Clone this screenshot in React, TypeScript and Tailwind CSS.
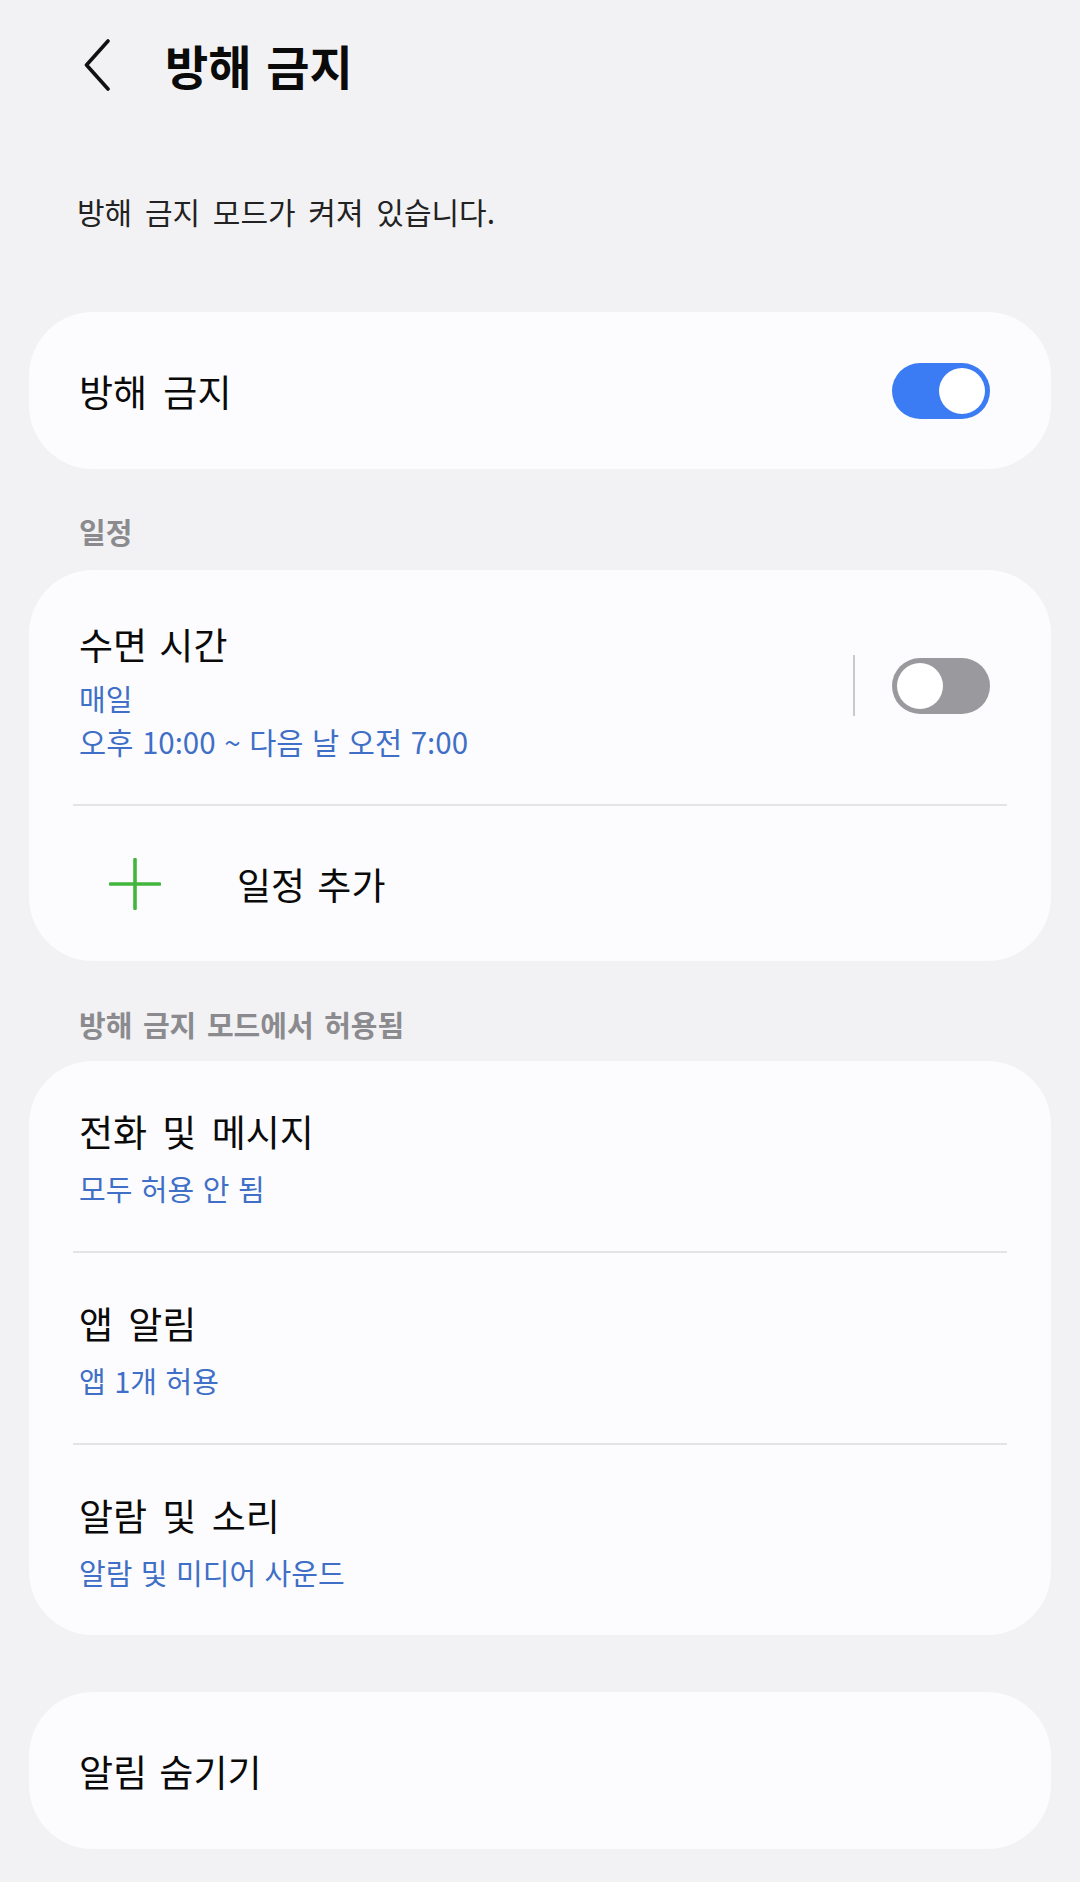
import React from "react";

const FONT = { fontFamily: '"Noto Sans CJK KR", "Noto Sans", sans-serif' };

function Toggle({ on }: { on: boolean }) {
  return on ? (
    <div className="w-[98px] h-[56px] rounded-full bg-[#3b7cf5] flex items-center justify-end pr-[5px]">
      <div className="w-[46px] h-[46px] rounded-full bg-white" />
    </div>
  ) : (
    <div className="w-[98px] h-[56px] rounded-full bg-[#9a9a9e] flex items-center justify-start pl-[5px]">
      <div className="w-[46px] h-[46px] rounded-full bg-white" />
    </div>
  );
}

function Divider() {
  return <div className="mx-[44px] h-[2px] bg-[#e4e4e7]" />;
}

function Item({ title, sub }: { title: string; sub: string }) {
  return (
    <div className="px-[50px] pt-[46px] pb-[43px]">
      <div className="text-[37px] leading-[48px] text-[#0a0a0a] [word-spacing:7px]">{title}</div>
      <div className="mt-[13px] text-[29px] leading-[40px] text-[#3f6fc6] [word-spacing:2px]">{sub}</div>
    </div>
  );
}

export default function App() {
  return (
    <div className="w-[1080px] h-[1882px] bg-[#f2f2f4] overflow-hidden" style={FONT}>
      {/* Header */}
      <div className="h-[130px] flex items-center pl-[84px]">
        <svg width="26" height="52" viewBox="0 0 26 52" fill="none" className="shrink-0">
          <path d="M24 2 L2.5 26 L24 50" stroke="#111" strokeWidth="3.6" strokeLinecap="round" strokeLinejoin="round" />
        </svg>
        <div className="ml-[55px] text-[47px] leading-[58px] font-bold text-[#0a0a0a] [word-spacing:4px]">방해 금지</div>
      </div>

      <div className="mt-[61px] pl-[77px] text-[30px] leading-[40px] text-[#222] [word-spacing:6px]">
        방해 금지 모드가 켜져 있습니다.
      </div>

      <div className="mx-[29px]">
        {/* Card 1 */}
        <div className="mt-[81px] h-[157px] rounded-[64px] bg-[#fcfcfe] flex items-center justify-between pl-[50px] pr-[61px]">
          <div className="text-[37px] leading-[48px] text-[#0a0a0a] [word-spacing:8px]">방해 금지</div>
          <Toggle on />
        </div>

        {/* Section 일정 */}
        <div className="mt-[42px] mb-[19px] pl-[50px] text-[29px] leading-[40px] font-semibold text-[#8b8b8f] [word-spacing:4px]">
          일정
        </div>

        {/* Card 2 */}
        <div className="rounded-[64px] bg-[#fcfcfe]">
          <div className="flex items-start justify-between pl-[50px] pr-[61px] pt-[50px] pb-[41px]">
            <div>
              <div className="text-[37px] leading-[48px] text-[#0a0a0a] [word-spacing:4px]">수면 시간</div>
              <div className="mt-[9px] text-[29px] leading-[43px] text-[#3f6fc6]">매일</div>
              <div className="text-[29.5px] leading-[43px] text-[#3f6fc6] [word-spacing:2px]">오후 10:00 ~ 다음 날 오전 7:00</div>
            </div>
            <div className="mt-[35px] flex items-center gap-[37px]">
              <div className="w-[2px] h-[61px] bg-[#c9c9cc]" />
              <Toggle on={false} />
            </div>
          </div>
          <Divider />
          <div className="h-[155px] flex items-center pl-[80px]">
            <svg width="52" height="52" viewBox="0 0 52 52" className="shrink-0">
              <path d="M26 1.5 V50.5 M1.5 26 H50.5" stroke="#42b53e" strokeWidth="3.6" strokeLinecap="round" />
            </svg>
            <div className="ml-[76px] text-[37px] leading-[48px] text-[#0a0a0a] [word-spacing:4px]">일정 추가</div>
          </div>
        </div>

        {/* Section 2 */}
        <div className="mt-[43px] mb-[17px] pl-[50px] text-[29px] leading-[40px] font-semibold text-[#8b8b8f] [word-spacing:4px]">
          방해 금지 모드에서 허용됨
        </div>

        {/* Card 3 */}
        <div className="rounded-[64px] bg-[#fcfcfe]">
          <Item title="전화 및 메시지" sub="모두 허용 안 됨" />
          <Divider />
          <Item title="앱 알림" sub="앱 1개 허용" />
          <Divider />
          <Item title="알람 및 소리" sub="알람 및 미디어 사운드" />
        </div>

        {/* Card 4 */}
        <div className="mt-[57px] h-[157px] rounded-[64px] bg-[#fcfcfe] flex items-center pl-[50px]">
          <div className="text-[37px] leading-[48px] text-[#0a0a0a] [word-spacing:4px]">알림 숨기기</div>
        </div>
      </div>
    </div>
  );
}
